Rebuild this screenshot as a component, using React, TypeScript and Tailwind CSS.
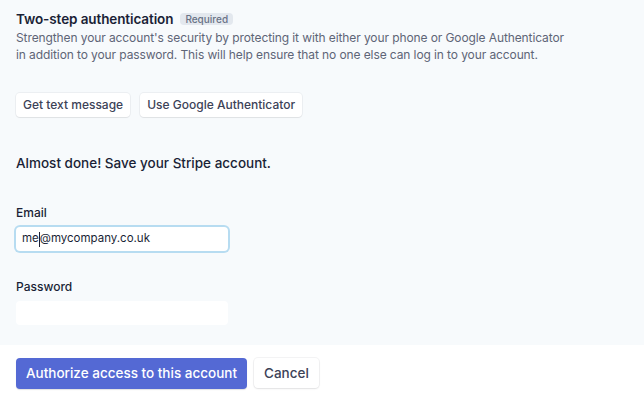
import React from "react";

export default function App() {
  const btn =
    "h-[24px] px-[7px] rounded-[4px] bg-white text-[12px] font-medium text-[#3c4257] shadow-[0_0_0_1px_rgba(60,66,87,0.06),0_1px_1px_rgba(0,0,0,0.06)] flex items-center";
  return (
    <div
      className="w-[644px] h-[401px] bg-white overflow-hidden"
      style={{ fontFamily: "Inter, 'Noto Sans', 'Liberation Sans', sans-serif" }}
    >
      <div className="h-[345px] bg-[#f7fafc] px-4 pt-[10px] flex flex-col">
        <div className="flex items-center h-[18px]">
          <span className="text-[13.5px] leading-[18px] font-semibold tracking-[-0.1px] text-[#1a1f36]">
            Two-step authentication
          </span>
          <span className="ml-[7px] h-[12px] px-[5px] rounded-[4px] bg-[#e3e8ee] text-[10px] leading-[12px] font-medium text-[#697386] flex items-center">
            Required
          </span>
        </div>
        <p className="mt-[1px] text-[12px] leading-[17px] tracking-[-0.1px] text-[#5e6577] whitespace-nowrap">
          Strengthen your account's security by protecting it with either your phone or Google Authenticator
          <br />
          in addition to your password. This will help ensure that no one else can log in to your account.
        </p>
        <div className="mt-[30px] flex gap-[10px]">
          <button className={btn}>Get text message</button>
          <button className={btn}>Use Google Authenticator</button>
        </div>
        <div className="mt-[36px] text-[13.5px] leading-[20px] font-medium text-[#1a1f36]">
          Almost done! Save your Stripe account.
        </div>
        <div className="mt-[32px] text-[12px] leading-[16px] font-medium text-[#1a1f36]">Email</div>
        <div className="mt-[6px] w-[212px] h-[24px] bg-white rounded-[4px] shadow-[0_0_0_2px_#b7dcf1] flex items-center px-[6px] text-[11.5px] text-[#1a1f36]">
          <span>me</span>
          <span className="w-[1px] h-[15px] bg-[#1a1f36]" />
          <span>@mycompany.co.uk</span>
        </div>
        <div className="mt-[28px] text-[12px] leading-[16px] font-medium text-[#1a1f36]">Password</div>
        <div className="mt-[6px] w-[212px] h-[24px] bg-white rounded-[4px]" />
      </div>
      <div className="px-4 pt-[13px] flex gap-[7px]">
        <button className="h-[31px] px-[10px] rounded-[4px] bg-[#5469d4] text-white text-[13.5px] font-medium shadow-[0_1px_1px_rgba(0,0,0,0.12)]">
          Authorize access to this account
        </button>
        <button className="h-[30px] px-[10px] rounded-[4px] bg-white text-[#3c4257] text-[13.5px] font-medium shadow-[0_0_0_1px_rgba(60,66,87,0.06),0_1px_2px_rgba(0,0,0,0.08)]">
          Cancel
        </button>
      </div>
    </div>
  );
}
